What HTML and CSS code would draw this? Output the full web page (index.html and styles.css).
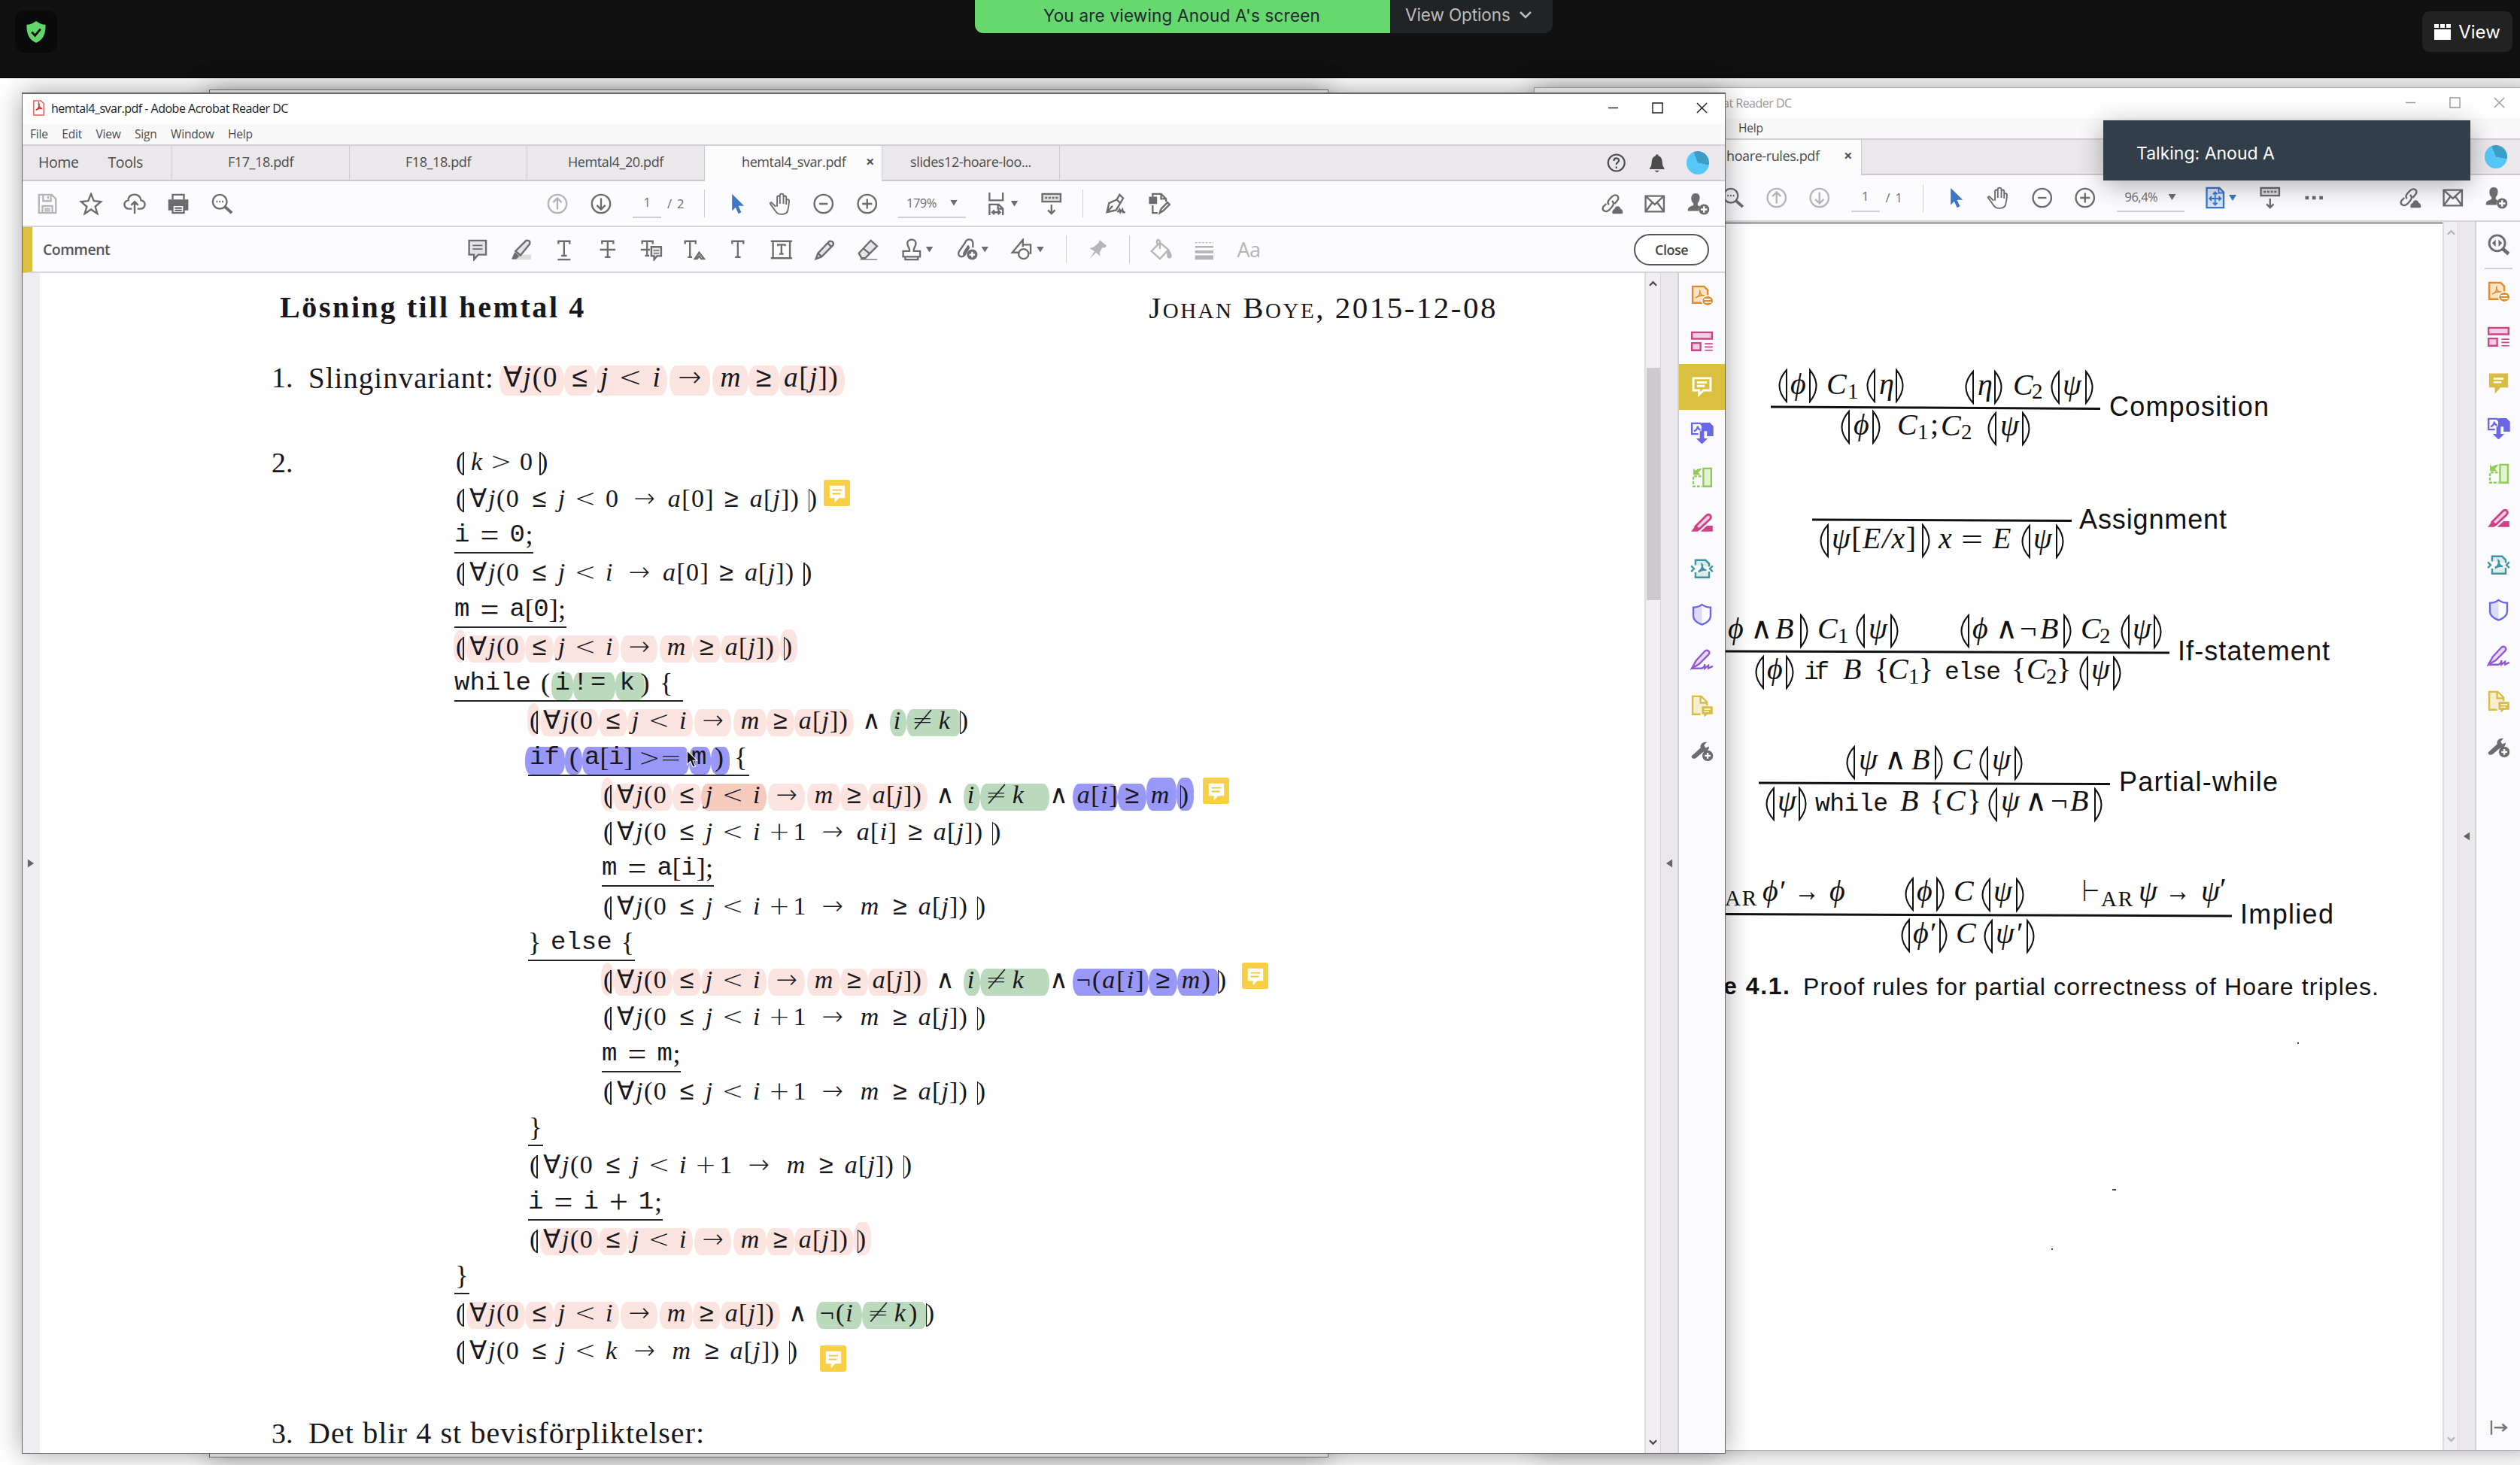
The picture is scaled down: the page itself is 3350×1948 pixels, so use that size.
FILE: index.html
```html
<!DOCTYPE html>
<html lang="en">
<head>
<meta charset="utf-8">
<title>Screen share</title>
<link rel="stylesheet" href="styles.css">
</head>
<body>
<svg class="defs" width="0" height="0">
<defs>
<symbol id="save" viewBox="0 0 32 32"><path d="M4 3h18l6 6v20H4z M10 3v9h11V3 M17 5v4 M9 29V19h14v10 M12 23h8 M12 26h8"/></symbol>
<symbol id="star" viewBox="0 0 32 32"><path d="M16 2l4 10 10 1-8 7 3 10-9-6-9 6 3-10-8-7 10-1z"/></symbol>
<symbol id="cloud" viewBox="0 0 32 32"><path d="M12 23H8a6 6 0 0 1-1-12C7 0 24 0 25 11a6 6 0 0 1-1 12h-4 M16 30V13 M11 18l5-5 5 5"/></symbol>
<symbol id="print" viewBox="0 0 32 32"><path d="M8 10V3h16v7"/><path fill="currentColor" d="M3 11h26v13h-5v-6H8v6H3z"/><path fill="#fcfcfe" d="M8 18h16v11H8z"/><path d="M11 22h10 M11 25.500h10"/></symbol>
<symbol id="find" viewBox="0 0 32 32"><circle cx="13" cy="13" r="10"/><path d="M20 20l10 9" stroke-width="4"/><path d="M8 13h2 M12 13h2 M16 13h2"/></symbol>
<symbol id="up" viewBox="0 0 32 32"><circle cx="16" cy="16" r="13"/><path d="M16 24V9 M10 14l6-6 6 6"/></symbol>
<symbol id="down" viewBox="0 0 32 32"><circle cx="16" cy="16" r="13"/><path d="M16 8v15 M10 18l6 6 6-6"/></symbol>
<symbol id="cursor" viewBox="0 0 32 32"><path fill="currentColor" stroke="none" d="M9 2l17 17h-8l4 9-4 2-4-9-5 5z"/></symbol>
<symbol id="hand" viewBox="0 0 32 32"><path d="M9 20L4 15c-2-2-4 0-2 2l8 11c3 4 14 4 16-2 1-4 2-10 2-14 0-3-4-3-4 0v5V7c0-3-4-3-4 0v9V4c0-3-5-3-5 0v12V7c0-3-4-3-4 0v13" stroke-width="2"/></symbol>
<symbol id="minus" viewBox="0 0 32 32"><circle cx="16" cy="16" r="13"/><path d="M10 16h12"/></symbol>
<symbol id="plus" viewBox="0 0 32 32"><circle cx="16" cy="16" r="13"/><path d="M9 16h14 M16 9v14"/></symbol>
<symbol id="fitw" viewBox="0 0 32 32"><path d="M6 0v11h19V0 M6 32V17h13l6 6v9 M18 17v6h7 M10 28h11 M13 25l-3 3 3 3 M18 25l3 3-3 3"/></symbol>
<symbol id="fitp" viewBox="0 0 32 32"><path fill="#d9e6f8" d="M4 2h18l6 6v22H4z"/><path d="M21 2v7h7 M16 8v17 M8 17h16 M13 11l3-3 3 3 M13 23l3 3 3-3 M11 14l-3 3 3 3 M21 14l3 3-3 3" stroke-width="2"/></symbol>
<symbol id="kbd" viewBox="0 0 32 32"><path fill="#ddd" d="M3 2h26v11H3z"/><path d="M7 7.500h3 M12 7.500h3 M17 7.500h3 M22 7.500h3 M16 17v13 M11 25l5 5 5-5"/></symbol>
<symbol id="pen" viewBox="0 0 32 32"><path d="M4 28L7 15l11-5 5 5-6 10-13 3z M18 10l4-7 5 5-4 7 M4 28l8-9 M19 28l3-4 1 4 3-4 1 4h3"/></symbol>
<symbol id="exp" viewBox="0 0 32 32"><path fill="currentColor" d="M3 7h9v8H3z"/><path d="M7 6V2h12l7 7v4 M19 2v7h7 M7 18v11h7 M17 29l2-6 9-9 3 3-9 9z"/></symbol>
<symbol id="link" viewBox="0 0 32 32"><path d="M12 17c-4-3 0-7 4-11 5-5 12-1 8 5l-4 5 M16 12c5 3 1 8-4 13-5 4-11 0-8-5l4-4"/><path fill="currentColor" d="M18 29c-1-4 2-4 3-5 1-5 6-4 6 0 3 0 4 4 3 5z"/></symbol>
<symbol id="mail" viewBox="0 0 32 32"><path d="M3 5h26v22H3z M3 5l13 12L29 5 M3 27l9-12 M29 27l-9-12"/></symbol>
<symbol id="person" viewBox="0 0 32 32"><path fill="currentColor" stroke="none" d="M12 1c9 0 6 12 3 14v3l3 2a8 8 0 0 0-2 6H1c0-5 2-6 8-8v-3C5 13 4 1 12 1z"/><circle cx="24" cy="24" r="7.500" fill="currentColor" stroke="none"/><path stroke="#fff" d="M24 19.500v9 M19.500 24h9"/></symbol>
<symbol id="help" viewBox="0 0 32 32"><circle cx="16" cy="16" r="13"/><path d="M12 13c0-6 8-5 8-1 0 3-4 3-4 7 M16 22v3"/></symbol>
<symbol id="bell" viewBox="0 0 32 32"><path fill="currentColor" stroke="none" d="M14 3h4v2c7 2 6 9 7 15l3 6H4l3-6c1-6 0-13 7-15z M12 28h8l-4 3z"/></symbol>
<symbol id="note" viewBox="0 0 32 32"><path fill="#e4e4e6" d="M4 3h24v20H17l-6 7v-7H4z"/><path d="M9 10h14 M9 15h14" stroke-width="2"/></symbol>
<symbol id="marker" viewBox="0 0 32 32"><path fill="#ddd" stroke="none" d="M8 30l8-7h14v7z"/><path fill="#e4e4e6" d="M8 18L23 3c5-1 6 2 5 5L15 24z"/><path fill="currentColor" d="M7 20l6 5-4 4H3z" stroke-width="1"/></symbol>
<symbol id="tu" viewBox="0 0 32 32"><path d="M8 8V4h16v4 M16 4v20 M12 24.500h8 M7 30h18"/></symbol>
<symbol id="ts" viewBox="0 0 32 32"><path d="M8 8V4h16v4 M16 4v22 M12 26.500h8 M5 16h22"/></symbol>
<symbol id="tr" viewBox="0 0 32 32"><path d="M3 8V4h15v4 M10 4v20 M7 24.500h6 M1 16h13"/><path fill="#e4e4e6" d="M16 12h14v13h-6l-4 5v-5h-4z"/><path d="M19 17h8 M19 21h8" stroke-width="1.500"/></symbol>
<symbol id="ti" viewBox="0 0 32 32"><path d="M3 8V4h15v4 M10 4v22 M7 26.500h6 M17 29l6-9 7 9h-4l-3-4-3 4z"/></symbol>
<symbol id="t" viewBox="0 0 32 32"><path d="M8 8V4h16v4 M16 4v22 M12 26.500h8"/></symbol>
<symbol id="tb" viewBox="0 0 32 32"><path d="M4 4h24v24H4z M11 11V9h10v2 M16 9v13 M13 22h6 M1 4h6 M25 4h6 M1 28h6 M25 28h6"/></symbol>
<symbol id="pencil" viewBox="0 0 32 32"><path fill="#e4e4e6" d="M3 29l3-8L22 4c5-1 7 3 5 6L11 26z"/><path d="M6 21l5 5 M20 7l5 5"/></symbol>
<symbol id="eraser" viewBox="0 0 32 32"><path fill="#e4e4e6" d="M3 21L20 3l9 8-17 17H7z"/><path d="M9 14l10 8"/><path d="M5 30h24" stroke-width="1.500"/></symbol>
<symbol id="stamp" viewBox="0 0 32 32"><path d="M13 18c1-4-3-6-3-11 0-7 12-7 12 0 0 5-4 7-3 11h9v8H4v-8z M7 26v4h18v-4"/></symbol>
<symbol id="clip" viewBox="0 0 32 32"><path d="M24 13V6c-1-6-9-6-11 0L4 19c-2 6 4 9 8 5l7-12 M12 24c-3-2 2-8 6-14"/><circle cx="23" cy="23" r="7.500" fill="currentColor" stroke="none"/><path stroke="#fff" d="M23 19v8 M19 23h8"/></symbol>
<symbol id="shapes" viewBox="0 0 32 32"><path d="M12 20H2L17 2v10 M17 9h11v12h-2"/><circle cx="18" cy="22" r="7"/></symbol>
<symbol id="pin" viewBox="0 0 32 32"><path fill="currentColor" stroke="none" d="M19 2l10 8-2 3h-4l-4 7 1 5-6-5-9 9 7-11-7-4 6-2 7-6z"/></symbol>
<symbol id="bucket" viewBox="0 0 32 32"><path d="M14 6l12 10-12 13L2 18z M14 15V4c-3-4-5-2-4 4"/><path fill="currentColor" d="M26 17c3 4 5 9 2 10s-4-4-2-10z"/></symbol>
<symbol id="lines" viewBox="0 0 32 32"><path d="M3 6h26" stroke-dasharray="3 2" stroke-width="1.500"/><path d="M3 12h26"/><path d="M3 19h26" stroke-width="4"/><path d="M3 27h26" stroke-width="6"/></symbol>
<symbol id="dots" viewBox="0 0 32 32"><path d="M4 16h5 M14 16h5 M24 16h5" stroke-width="5"/></symbol>

<symbol id="s1" viewBox="0 0 32 32"><path fill="#fbe3c4" d="M3 3h16l5 5v18H3z"/><path d="M7 19c5-2 7-6 6-11 0 6 3 8 7 8-5-1-9 0-13 3" stroke-width="1.500"/><ellipse cx="24" cy="23" rx="8" ry="7" fill="currentColor" stroke="#fff" stroke-width="1.500"/><path stroke="#fff" stroke-width="2" d="M19 21h9 M20 25h9"/></symbol>
<symbol id="s2" viewBox="0 0 32 32"><path fill="#f3cfe5" d="M2 3h28v9H2z M2 18h12v10H2z"/><path d="M20 19h11 M20 23.500h11 M20 28h11" stroke-width="1.700"/></symbol>
<symbol id="s3" viewBox="0 0 32 32"><path stroke-width="3" d="M4 4h24v17H18l-6 6v-6H4z M9 10h14 M9 15h11"/></symbol>
<symbol id="s3f" viewBox="0 0 32 32"><path fill="currentColor" d="M4 4h24v17H18l-6 7v-7H4z"/><path stroke="#fff" d="M9 10h14 M9 15h11"/></symbol>
<symbol id="s4" viewBox="0 0 32 32"><path d="M11 18H2V3h12l3 4 M5 14c5-2 5-7 5-7s1 5 4 5"/><path fill="currentColor" stroke="none" d="M16 2h11l5 5v14h-9v-7h-8z M13 14h6v10h5l-8 8-8-8h5z"/></symbol>
<symbol id="s5" viewBox="0 0 32 32"><path fill="#e2f4d3" d="M18 3h11v25H18z"/><path stroke-dasharray="4 2" d="M15 14H4v14h12"/><path fill="currentColor" stroke="none" d="M4 3l3 3c3-2 5-3 9-3l-5 6 3 3H4z"/></symbol>
<symbol id="s6" viewBox="0 0 32 32"><path fill="currentColor" stroke="none" d="M14 27l9-8h8v8z M1 27l6-8 6 5-3 3z"/><path fill="#f3cfe5" d="M7 20L23 4c5-2 7 3 4 6L12 24z" stroke-width="3"/></symbol>
<symbol id="s7" viewBox="0 0 32 32"><path fill="#d9ecef" d="M7 11V4h14l5 5v4 M26 20v8H7v-7"/><path d="M1 12l4 4-4 4 M31 12l-4 4 4 4 M11 20c6-2 6-9 5-10 0 6 3 8 6 8-4-1-7 0-11 2"/></symbol>
<symbol id="s8" viewBox="0 0 32 32"><path fill="#dcdcf8" stroke="none" d="M16 2v28C8 27 4 23 4 18V6z"/><path stroke-width="2.500" d="M16 2c4 3 8 4 12 4v12c0 5-4 9-12 12C8 27 4 23 4 18V6c4 0 8-1 12-4z"/></symbol>
<symbol id="s9" viewBox="0 0 32 32"><path fill="#e8daf5" d="M2 28l6-11L20 4c5-3 8 2 5 5L12 22z" stroke-width="2.500"/><path d="M2 28h14c4-2 4-6 4-6v6l5-4v4l6-3"/></symbol>
<symbol id="s10" viewBox="0 0 32 32"><path fill="#f6efcf" d="M14 28H3V3h12l8 8v5 M14 3v9h9"/><path fill="currentColor" stroke="none" d="M16 17h15v11h-7l-5 4v-4h-3z"/><path stroke="#fff" stroke-width="1.500" d="M19 21h9 M19 24.500h7"/></symbol>
<symbol id="s11" viewBox="0 0 32 32"><path fill="currentColor" stroke="none" d="M2 23l12-11c-1-6 4-9 9-8l-4 4 2 4 5-2c0 4-2 6-5 7a8 8 0 0 0-6 3l-7 6c-4 3-8-1-6-3z"/><circle cx="24" cy="23" r="7.500" fill="currentColor" stroke="none"/><path stroke="#fff" d="M24 19v8 M20 23h8"/></symbol>
<symbol id="s0" viewBox="0 0 32 32"><circle cx="14" cy="14" r="11" stroke-width="3"/><path d="M22 22l8 7" stroke-width="5"/><path fill="currentColor" stroke="none" d="M12 9v10l-5-5z M16 9v10l5-5z"/></symbol>
<symbol id="tri" viewBox="0 0 32 32"><path fill="#666" stroke="none" d="M22 8v16L10 16z"/></symbol>
<symbol id="out" viewBox="0 0 32 32"><path d="M6 6v20 M10 16h17 M21 11l6 5-6 5"/></symbol>
<symbol id="pdf" viewBox="0 0 16 22"><path fill="#fff" stroke="#e0605a" stroke-width="1.500" d="M1 1h10l4 4v16H1z"/><path stroke="#d8322b" stroke-width="1.700" d="M4 14c5-2 5-8 4-10-1 5 3 8 5 8-3-1-6 0-9 2"/></symbol>
<symbol id="memo" viewBox="0 0 36 36"><rect width="36" height="36" rx="3" fill="#f8cf45" stroke="none"/><path fill="#fff" stroke="none" d="M8 8h21v17h-8l-6 6v-6H8z"/><path stroke="#f3c53a" stroke-width="2" d="M12 14h13 M12 19h11"/></symbol>
</defs>
</svg>

<header class="zoom-bar">
  <div class="shield"><svg viewBox="0 0 26 30"><path fill="#62d66b" stroke="none" d="M13 0c4 3 8 5 13 5 0 12-2 20-13 25C2 25 0 17 0 5c5 0 9-2 13-5z"/><path stroke="#0a0a0a" stroke-width="3" d="M7 15l4.500 5L19 11"/></svg></div>
  <div class="banner"><div class="banner-msg">You are viewing Anoud A's screen</div><div class="banner-opt">View Options<svg viewBox="0 0 16 10"><path d="M1 1l7 7 7-7"/></svg></div></div>
  <div class="view-btn"><svg viewBox="0 0 22 22"><path fill="#fff" stroke="none" d="M0 1h6v5H0z M8 1h6v5H8z M16 1h6v5h-6z M0 8h22v14H0z"/></svg>View</div>
</header>

<main class="desktop">
  <div class="win back"></div>

  <section class="win w2">
    <div class="title"><span>at Reader DC</span><div class="ctl"><svg viewBox="0 0 16 16"><path d="M1 8h14"/></svg><svg viewBox="0 0 16 16"><path d="M1 1h14v14H1z"/></svg><svg viewBox="0 0 16 16"><path d="M1 1l14 14 M15 1L1 15"/></svg></div></div>
    <nav class="menu"><span>Help</span></nav>
    <div class="tabs"><div class="tab on"><span>hoare-rules.pdf</span><b>×</b></div><div class="right"><div class="avatar"></div></div></div>
    <div class="bar">
      <svg class="ic"><use href="#find"/></svg><svg class="ic dim"><use href="#up"/></svg><svg class="ic dim"><use href="#down"/></svg>
      <span class="pg">1</span><span class="of">/&nbsp; 1</span><i class="dv"></i>
      <svg class="ic blue"><use href="#cursor"/></svg><svg class="ic"><use href="#hand"/></svg><svg class="ic"><use href="#minus"/></svg><svg class="ic"><use href="#plus"/></svg>
      <span class="zm">96,4%<em></em></span><svg class="ic blue"><use href="#fitp"/></svg><em class="dd bl"></em><svg class="ic k"><use href="#kbd"/></svg><svg class="ic"><use href="#dots"/></svg>
      <div class="right"><svg class="ic"><use href="#link"/></svg><svg class="ic"><use href="#mail"/></svg><svg class="ic"><use href="#person"/></svg></div>
    </div>
    <div class="body">
      <div class="scan">
        <svg viewBox="2294 297 953 1630" width="953" height="1630" class="fig">
          <g class="rule"><path d="M2354 540l200 1 238 1.500"/><path d="M2409 690l345 1.500"/><path d="M2290 865l594 2"/><path d="M2338 1040l467 1.500"/><path d="M2290 1214.500l677 2.500"/></g>
          <g class="par">
            <path d="M2375 491q-19 21 0 42z M2406 491q17 21 0 42z M2492 491q-19 21 0 42z M2521 491q17 21 0 42z M2623 493q-19 21 0 42z M2652 493q17 21 0 42z M2737 493q-19 21 0 42z M2773 493q17 21 0 42z"/>
            <path d="M2458 546q-19 21 0 42z M2490 546q17 21 0 42z M2653 548q-19 21 0 42z M2689 548q17 21 0 42z"/>
            <path d="M2430 697q-19 21 0 42z M2556 697q17 21 0 42z M2698 698q-19 21 0 42z M2734 698q17 21 0 42z"/>
            <path d="M2394 817q17 21 0 42z M2478 817q-19 21 0 42z M2514 817q17 21 0 42z M2617 817q-19 21 0 42z M2744 817q17 21 0 42z M2830 818q-19 21 0 42z M2864 818q17 21 0 42z"/>
            <path d="M2344 872q-19 21 0 42z M2375 872q17 21 0 42z M2775 873q-19 21 0 42z M2810 873q17 21 0 42z"/>
            <path d="M2465 992q-19 21 0 42z M2573 992q17 21 0 42z M2642 993q-19 21 0 42z M2679 993q17 21 0 42z"/>
            <path d="M2358 1047q-19 21 0 42z M2392 1047q17 21 0 42z M2654 1048q-19 21 0 42z M2785 1048q17 21 0 42z"/>
            <path d="M2543 1167q-19 21 0 42z M2575 1167q17 21 0 42z M2645 1168q-19 21 0 42z M2681 1168q17 21 0 42z"/>
            <path d="M2538 1222q-19 21 0 42z M2579 1222q17 21 0 42z M2648 1223q-19 21 0 42z M2695 1223q17 21 0 42z"/>
          </g>
          <g class="mi">
            <text x="2380" y="523">ϕ</text><text x="2428" y="523">C</text><text x="2498" y="523">η</text><text x="2629" y="524">η</text><text x="2676" y="524">C</text><text x="2742" y="524">ψ</text>
            <text x="2464" y="577">ϕ</text><text x="2522" y="577">C</text><text x="2580" y="578">C</text><text x="2659" y="578">ψ</text>
            <text x="2435" y="728" textLength="112"><tspan>ψ</tspan><tspan class="up">[</tspan>E/x<tspan class="up">]</tspan></text><text x="2577" y="728">x</text><text x="2649" y="728">E</text><text x="2703" y="728">ψ</text>
            <text x="2297" y="848">ϕ</text><text x="2360" y="848">B</text><text x="2416" y="848">C</text><text x="2484" y="848">ψ</text><text x="2622" y="848">ϕ</text><text x="2712" y="848">B</text><text x="2766" y="848">C</text><text x="2835" y="848">ψ</text>
            <text x="2349" y="902">ϕ</text><text x="2450" y="902">B</text><text x="2510" y="902">C</text><text x="2694" y="902">C</text><text x="2780" y="902">ψ</text>
            <text x="2471" y="1022">ψ</text><text x="2541" y="1022">B</text><text x="2595" y="1022">C</text><text x="2648" y="1022">ψ</text>
            <text x="2363" y="1077">ψ</text><text x="2526" y="1077">B</text><text x="2586" y="1077">C</text><text x="2660" y="1077">ψ</text><text x="2752" y="1077">B</text>
            <text x="2343" y="1197">ϕ</text><text x="2432" y="1197">ϕ</text><text x="2548" y="1197">ϕ</text><text x="2597" y="1197">C</text><text x="2650" y="1197">ψ</text><text x="2843" y="1197">ψ</text><text x="2926" y="1197">ψ</text>
            <text x="2543" y="1253">ϕ</text><text x="2600" y="1253">C</text><text x="2653" y="1253">ψ</text>
          </g>
          <g class="up">
            <text x="2566" y="577">;</text><text x="2607" y="730" textLength="29" lengthAdjust="spacingAndGlyphs">=</text>
            <text x="2327" y="848" textLength="23">∧</text><text x="2653" y="848" textLength="23">∧</text><text x="2685" y="848" textLength="24">¬</text>
            <text x="2492" y="902">{</text><text x="2551" y="902">}</text><text x="2674" y="902">{</text><text x="2734" y="902">}</text>
            <text x="2505" y="1022" textLength="23">∧</text><text x="2565" y="1077">{</text><text x="2615" y="1077">}</text><text x="2692" y="1077" textLength="23">∧</text><text x="2726" y="1077" textLength="24">¬</text>
            <text x="2366" y="1197">′</text><text x="2385" y="1197" textLength="34" lengthAdjust="spacingAndGlyphs">→</text><text x="2768" y="1197" textLength="23" lengthAdjust="spacingAndGlyphs">⊢</text><text x="2878" y="1197" textLength="34" lengthAdjust="spacingAndGlyphs">→</text><text x="2951" y="1194">′</text><text x="2566" y="1253">′</text><text x="2681" y="1253">′</text>
          </g>
          <g class="sub"><text x="2456" y="529">1</text><text x="2701" y="529">2</text><text x="2549" y="583">1</text><text x="2607" y="583">2</text><text x="2443" y="854">1</text><text x="2791" y="854">2</text><text x="2537" y="908">1</text><text x="2720" y="908">2</text><text x="2293" y="1203" textLength="42">AR</text><text x="2793" y="1204" textLength="42">AR</text></g>
          <g class="tt"><text x="2398" y="902" textLength="34">if</text><text x="2585" y="902" textLength="75">else</text><text x="2413" y="1077" textLength="97">while</text></g>
          <g class="lab"><text x="2804" y="552" textLength="212">Composition</text><text x="2764" y="702" textLength="196">Assignment</text><text x="2895" y="877" textLength="202">If-statement</text><text x="2817" y="1051" textLength="211">Partial-while</text><text x="2978" y="1227" textLength="124">Implied</text></g>
          <g class="cap"><text x="2291" y="1321" textLength="88" font-weight="bold">e 4.1.</text><text x="2397" y="1322" textLength="765">Proof rules for partial correctness of Hoare triples.</text></g>
          <path fill="#444" stroke="none" d="M2808 1580h5v2h-5z M2727 1659h2v2h-2z M3054 1385h2v2h-2z"/>
        </svg>
      </div>
      <div class="scroll"><svg viewBox="0 0 12 8"><path d="M1 7l5-5 5 5"/></svg><svg viewBox="0 0 12 8"><path d="M1 1l5 5 5-5"/></svg></div>
      <div class="strip"><svg class="tri"><use href="#tri"/></svg></div>
      <aside class="side">
        <svg class="g"><use href="#s0"/></svg><hr>
        <svg class="c-or"><use href="#s1"/></svg><svg class="c-pk"><use href="#s2"/></svg><svg class="c-ye"><use href="#s3f"/></svg><svg class="c-in"><use href="#s4"/></svg><svg class="c-gr"><use href="#s5"/></svg><svg class="c-pk"><use href="#s6"/></svg><svg class="c-te"><use href="#s7"/></svg><svg class="c-in"><use href="#s8"/></svg><svg class="c-pu"><use href="#s9"/></svg><svg class="c-ye"><use href="#s10"/></svg><svg class="g"><use href="#s11"/></svg>
        <svg class="g last"><use href="#out"/></svg>
      </aside>
    </div>
  </section>

  <section class="win w1">
    <div class="title"><svg class="pdf"><use href="#pdf"/></svg><span>hemtal4_svar.pdf - Adobe Acrobat Reader DC</span><div class="ctl"><svg viewBox="0 0 16 16"><path d="M1 8h14"/></svg><svg viewBox="0 0 16 16"><path d="M1 1h14v14H1z"/></svg><svg viewBox="0 0 16 16"><path d="M1 1l14 14 M15 1L1 15"/></svg></div></div>
    <nav class="menu"><span>File</span><span>Edit</span><span>View</span><span>Sign</span><span>Window</span><span>Help</span></nav>
    <div class="tabs"><div class="home"><span>Home</span><span>Tools</span></div><div class="tab">F17_18.pdf</div><div class="tab">F18_18.pdf</div><div class="tab">Hemtal4_20.pdf</div><div class="tab on"><span>hemtal4_svar.pdf</span><b>×</b></div><div class="tab">slides12-hoare-loo...</div>
      <div class="right"><svg class="ic"><use href="#help"/></svg><svg class="ic"><use href="#bell"/></svg><div class="avatar"></div></div></div>
    <div class="bar">
      <svg class="ic dim"><use href="#save"/></svg><svg class="ic"><use href="#star"/></svg><svg class="ic"><use href="#cloud"/></svg><svg class="ic"><use href="#print"/></svg><svg class="ic"><use href="#find"/></svg>
      <svg class="ic dim first"><use href="#up"/></svg><svg class="ic"><use href="#down"/></svg>
      <span class="pg">1</span><span class="of">/&nbsp; 2</span><i class="dv"></i>
      <svg class="ic blue"><use href="#cursor"/></svg><svg class="ic"><use href="#hand"/></svg><svg class="ic"><use href="#minus"/></svg><svg class="ic"><use href="#plus"/></svg>
      <span class="zm">179%<em></em></span><svg class="ic"><use href="#fitw"/></svg><em class="dd"></em><svg class="ic k"><use href="#kbd"/></svg><i class="dv d2"></i><svg class="ic"><use href="#pen"/></svg><svg class="ic"><use href="#exp"/></svg>
      <div class="right"><svg class="ic"><use href="#link"/></svg><svg class="ic"><use href="#mail"/></svg><svg class="ic"><use href="#person"/></svg></div>
    </div>
    <div class="bar cmt">
      <span class="name">Comment</span>
      <svg class="ic"><use href="#note"/></svg><svg class="ic"><use href="#marker"/></svg><svg class="ic"><use href="#tu"/></svg><svg class="ic"><use href="#ts"/></svg><svg class="ic"><use href="#tr"/></svg><svg class="ic"><use href="#ti"/></svg><svg class="ic"><use href="#t"/></svg><svg class="ic"><use href="#tb"/></svg><svg class="ic"><use href="#pencil"/></svg><svg class="ic"><use href="#eraser"/></svg><svg class="ic"><use href="#stamp"/></svg><em class="dd"></em><svg class="ic s"><use href="#clip"/></svg><em class="dd"></em><svg class="ic s"><use href="#shapes"/></svg><em class="dd"></em><i class="dv d3"></i><svg class="ic dim"><use href="#pin"/></svg><i class="dv d4"></i><svg class="ic dim"><use href="#bucket"/></svg><svg class="ic dim"><use href="#lines"/></svg><span class="aa">Aa</span>
      <button class="close">Close</button>
    </div>
    <div class="body">
      <div class="nav"><svg class="tri flip"><use href="#tri"/></svg></div>
      <article class="paper">
        <header class="dochead"><h1>Lösning till hemtal 4</h1><p>Johan Boye, 2015-12-08</p></header>
        <div class="item i1"><span class="no">1.</span><span class="txt sl">Slinginvariant:</span><span class="m big pk"><span class="c1">∀<i>j</i>(0</span><span class="c2">≤</span><span class="c3"><i>j</i><u>&lt;</u><i>i</i></span><span class="c4">→</span><span class="c5"><i>m</i></span><span class="c6">≥</span><span class="c7"><i>a</i>[<i>j</i>])</span></span></div>
        <div class="item i2"><span class="no">2.</span>
          <div class="prog">
            <div class="m"><b class="lp">(</b><span class="kk"><i>k</i><u>&gt;</u>0</span><b class="rp">)</b></div>
            <div class="m"><b class="lp">(</b><span class="c1">∀<i>j</i>(0</span><span class="c2">≤</span><span class="c3 w0"><i>j</i><u>&lt;</u>0</span><span class="c4">→</span><span class="c5 a0"><i>a</i>[0]</span><span class="c6">≥</span><span class="c7"><i>a</i>[<i>j</i>])</span><b class="rp">)</b><svg class="memo n1"><use href="#memo"/></svg></div>
            <div class="m code"><span>i<s>=</s>0<q>;</q></span></div>
            <div class="m"><b class="lp">(</b><span class="c1">∀<i>j</i>(0</span><span class="c2">≤</span><span class="c3"><i>j</i><u>&lt;</u><i>i</i></span><span class="c4">→</span><span class="c5 a0"><i>a</i>[0]</span><span class="c6">≥</span><span class="c7"><i>a</i>[<i>j</i>])</span><b class="rp">)</b></div>
            <div class="m code"><span>m<s>=</s>a<q>[</q>0<q>]</q><q>;</q></span></div>
            <div class="m pk"><b class="lp">(</b><span class="c1">∀<i>j</i>(0</span><span class="c2">≤</span><span class="c3"><i>j</i><u>&lt;</u><i>i</i></span><span class="c4">→</span><span class="c5"><i>m</i></span><span class="c6">≥</span><span class="c7"><i>a</i>[<i>j</i>])</span><b class="rp">)</b></div>
            <div class="m code wh"><span>while<q class="sp">(</q><u class="gn"><u>i</u><u>!=</u><u>k</u></u><q>)</q><q class="br">{</q></span></div>
            <div class="m t1"><span class="pk"><b class="lp">(</b><span class="c1">∀<i>j</i>(0</span><span class="c2">≤</span><span class="c3"><i>j</i><u>&lt;</u><i>i</i></span><span class="c4">→</span><span class="c5"><i>m</i></span><span class="c6">≥</span><span class="c7"><i>a</i>[<i>j</i>])</span></span><span class="an">∧</span><span class="gn"><span class="g1"><i>i</i></span><span class="g2"><u>≠</u><i>k</i></span></span><b class="rp tight">)</b></div>
            <div class="m code t1 if"><span><u class="bu"><u>if</u><u><q>(</q></u><u>a<q>[</q>i<q>]</q></u><u class="ge">&gt;=</u><u>m</u><u><q>)</q></u></u><q class="br">{</q></span></div>
            <div class="m t2"><span class="pk"><b class="lp">(</b><span class="c1">∀<i>j</i>(0</span><span class="c2">≤</span><span class="c3 deep"><i>j</i><u>&lt;</u><i>i</i></span><span class="c4">→</span><span class="c5"><i>m</i></span><span class="c6">≥</span><span class="c7"><i>a</i>[<i>j</i>])</span></span><span class="an">∧</span><span class="gn"><span class="g1"><i>i</i></span><span class="g2 g3"><u>≠</u><i>k</i></span></span><span class="an a2">∧</span><span class="bu"><span class="b1"><i>a</i>[<i>i</i>]</span><span class="b2">≥</span><span class="b3"><i>m</i></span><b class="rp">)</b></span><svg class="memo n2"><use href="#memo"/></svg></div>
            <div class="m t2"><b class="lp">(</b><span class="c1">∀<i>j</i>(0</span><span class="c2">≤</span><span class="c3"><i>j</i><u>&lt;</u><i>i</i></span><span class="pl"><u>+</u>1</span><span class="c4">→</span><span class="c5 ai"><i>a</i>[<i>i</i>]</span><span class="c6">≥</span><span class="c7"><i>a</i>[<i>j</i>])</span><b class="rp">)</b></div>
            <div class="m code t2"><span>m<s>=</s>a<q>[</q>i<q>]</q><q>;</q></span></div>
            <div class="m t2"><b class="lp">(</b><span class="c1">∀<i>j</i>(0</span><span class="c2">≤</span><span class="c3"><i>j</i><u>&lt;</u><i>i</i></span><span class="pl"><u>+</u>1</span><span class="c4">→</span><span class="c5"><i>m</i></span><span class="c6">≥</span><span class="c7"><i>a</i>[<i>j</i>])</span><b class="rp">)</b></div>
            <div class="m code t1"><span><q class="b0">}</q>else<q class="br b4">{</q></span></div>
            <div class="m t2"><span class="pk"><b class="lp">(</b><span class="c1">∀<i>j</i>(0</span><span class="c2">≤</span><span class="c3"><i>j</i><u>&lt;</u><i>i</i></span><span class="c4">→</span><span class="c5"><i>m</i></span><span class="c6">≥</span><span class="c7"><i>a</i>[<i>j</i>])</span></span><span class="an">∧</span><span class="gn"><span class="g1"><i>i</i></span><span class="g2 g3"><u>≠</u><i>k</i></span></span><span class="an a2">∧</span><span class="bu"><span class="b5">¬(<i>a</i>[<i>i</i>]</span><span class="b2">≥</span><span class="b6"><i>m</i>)</span></span><b class="rp tight">)</b><svg class="memo n3"><use href="#memo"/></svg></div>
            <div class="m t2"><b class="lp">(</b><span class="c1">∀<i>j</i>(0</span><span class="c2">≤</span><span class="c3"><i>j</i><u>&lt;</u><i>i</i></span><span class="pl"><u>+</u>1</span><span class="c4">→</span><span class="c5"><i>m</i></span><span class="c6">≥</span><span class="c7"><i>a</i>[<i>j</i>])</span><b class="rp">)</b></div>
            <div class="m code t2"><span>m<s>=</s>m<q>;</q></span></div>
            <div class="m t2"><b class="lp">(</b><span class="c1">∀<i>j</i>(0</span><span class="c2">≤</span><span class="c3"><i>j</i><u>&lt;</u><i>i</i></span><span class="pl"><u>+</u>1</span><span class="c4">→</span><span class="c5"><i>m</i></span><span class="c6">≥</span><span class="c7"><i>a</i>[<i>j</i>])</span><b class="rp">)</b></div>
            <div class="m code t1"><span><q class="b7">}</q></span></div>
            <div class="m t1"><b class="lp">(</b><span class="c1">∀<i>j</i>(0</span><span class="c2">≤</span><span class="c3"><i>j</i><u>&lt;</u><i>i</i></span><span class="pl"><u>+</u>1</span><span class="c4">→</span><span class="c5"><i>m</i></span><span class="c6">≥</span><span class="c7"><i>a</i>[<i>j</i>])</span><b class="rp">)</b></div>
            <div class="m code t1"><span>i<s>=</s>i<s>+</s>1<q>;</q></span></div>
            <div class="m t1 pk nolp"><b class="lp">(</b><span class="c1">∀<i>j</i>(0</span><span class="c2">≤</span><span class="c3"><i>j</i><u>&lt;</u><i>i</i></span><span class="c4">→</span><span class="c5"><i>m</i></span><span class="c6">≥</span><span class="c7"><i>a</i>[<i>j</i>])</span><b class="rp">)</b></div>
            <div class="m code"><span><q class="b7">}</q></span></div>
            <div class="m"><span class="pk nolp"><b class="lp">(</b><span class="c1">∀<i>j</i>(0</span><span class="c2">≤</span><span class="c3"><i>j</i><u>&lt;</u><i>i</i></span><span class="c4">→</span><span class="c5"><i>m</i></span><span class="c6">≥</span><span class="c7"><i>a</i>[<i>j</i>])</span></span><span class="an">∧</span><span class="gn"><span class="g4">¬(<i>i</i></span><span class="g5"><u>≠</u><i>k</i>)</span></span><b class="rp tight">)</b></div>
            <div class="m"><b class="lp">(</b><span class="c1">∀<i>j</i>(0</span><span class="c2">≤</span><span class="c3 w0"><i>j</i><u>&lt;</u><i>k</i></span><span class="c4">→</span><span class="c5"><i>m</i></span><span class="c6">≥</span><span class="c7"><i>a</i>[<i>j</i>])</span><b class="rp">)</b><svg class="memo n4"><use href="#memo"/></svg></div>
          </div>
        </div>
        <div class="item i3"><span class="no">3.</span><span class="txt de">Det blir 4 st bevisförpliktelser:</span></div>
        <svg class="pointer" viewBox="0 0 14 22"><path fill="#111" stroke="#fff" stroke-width="1" d="M1 1v17l4-4 3 7 3-1-3-7h5z"/></svg>
      </article>
      <div class="scroll"><svg viewBox="0 0 12 8"><path d="M1 7l5-5 5 5"/></svg><div class="thumb"></div><svg viewBox="0 0 12 8"><path d="M1 1l5 5 5-5"/></svg></div>
      <div class="strip"><svg class="tri"><use href="#tri"/></svg></div>
      <aside class="side">
        <svg class="c-or"><use href="#s1"/></svg><svg class="c-pk"><use href="#s2"/></svg><svg class="sel"><use href="#s3"/></svg><svg class="c-in"><use href="#s4"/></svg><svg class="c-gr"><use href="#s5"/></svg><svg class="c-pk"><use href="#s6"/></svg><svg class="c-te"><use href="#s7"/></svg><svg class="c-in"><use href="#s8"/></svg><svg class="c-pu"><use href="#s9"/></svg><svg class="c-ye"><use href="#s10"/></svg><svg class="g"><use href="#s11"/></svg>
      </aside>
    </div>
  </section>

  <div class="talking">Talking: Anoud A</div>
</main>
</body>
</html>
```
FILE: styles.css
```css
* { box-sizing: border-box; }
html, body { margin: 0; width: 3350px; height: 1948px; overflow: hidden; background: #fff; }
body { font-family: "Open Sans", "Noto Sans", sans-serif; color: #4b4b4b; display: flex; flex-direction: column; }
svg { fill: none; stroke: currentColor; stroke-width: 2.5; flex: none; }
.defs { position: absolute; }
em, i { font-style: normal; }

/* meeting bar */
.zoom-bar { height: 104px; background: #111; border-bottom: 1px solid #000; display: flex; justify-content: space-between; align-items: flex-start; font-family: Inter, sans-serif; color: #fff; }
.shield { width: 56px; height: 56px; margin: 14px 0 0 20px; border-radius: 12px; background: #0a0a0a; display: flex; align-items: center; justify-content: center; }
.shield svg { width: 26px; height: 29px; }
.banner { display: flex; height: 44px; margin-left: 64px; border-radius: 0 0 11px 11px; overflow: hidden; font-size: 22.500px; line-height: 42px; }
.banner-msg { width: 552px; background: #66d86d; color: #1d2a30; text-align: center; letter-spacing: .2px; padding-right: 2px; }
.banner-opt { width: 216px; background: #222324; color: #bdbdbd; display: flex; align-items: center; padding-left: 20px; gap: 12px; line-height: 38px; padding-bottom: 5px; letter-spacing: -.1px; }
.banner-opt svg { width: 16px; height: 10px; }
.view-btn { width: 120px; height: 54px; margin: 15px 10px 0 0; border-radius: 9px; background: #222; display: flex; align-items: center; justify-content: center; gap: 10px; font-size: 24px; }
.view-btn svg { width: 22px; height: 22px; }

/* windows */
.desktop { position: relative; height: 1844px; background: #fff; }
.win { position: absolute; background: #fcfcfe; border: 1px solid #777; display: flex; flex-direction: column; box-shadow: 0 0 34px rgba(0,0,0,.36); }
.back { left: 278px; top: 15px; width: 1488px; height: 1819px; }
.w2 { left: 2039px; top: 12px; width: 1330px; height: 1813px; border-color: #aaa; }
.w1 { left: 29px; top: 19px; width: 2265px; height: 1810px; border-color: #666; border-top-width: 2px; }
.w2 > * { width: 1310px; }

.title { height: 40px; display: flex; align-items: center; font-size: 16px; color: #1c1c1c; letter-spacing: -.5px; background: #fff; padding-bottom: 3px; }
.w1 .title { padding-left: 13px; }
.pdf { width: 17px; height: 21px; margin-right: 8px; }
.w2 .title { padding-left: 250px; padding-bottom: 1px; color: #999; }
.ctl { margin-left: auto; display: flex; gap: 44px; padding-right: 23px; }
.ctl svg { width: 15px; height: 15px; stroke-width: 1.5; }
.w2 .ctl { padding-right: 20px; }
.menu { height: 27px; display: flex; gap: 18.500px; padding-left: 10px; font-size: 15.500px; line-height: 26px; letter-spacing: -.2px; background: #f9f9fa; }
.w2 .menu { padding-left: 271px; }
.tabs { height: 49px; flex: none; border-top: 2px solid #d2d0d4; display: flex; background: #eae8eb; font-size: 18px; line-height: 43px; letter-spacing: -.4px; box-shadow: inset 0 -2px #cdcbd0; }
.home { width: 199px; display: flex; padding-left: 21px; gap: 39px; font-size: 19.500px; border-right: 1px solid #cdcbd0; }
.tab { width: 236px; text-align: center; border-right: 1px solid #cdcbd0; }
.tab.on { background: #fcfcfd; display: flex; justify-content: space-between; padding: 0 10px 0 49px; }
.tab b { font-size: 20px; line-height: 41px; color: #555; }
.w2 .tab.on { width: 435px; padding-left: 255px; padding-right: 12px; }
.right { margin-left: auto; display: flex; align-items: center; }
.tabs .right { padding-right: 21px; }
.w2 .tabs .right { padding-right: 17px; }
.tabs .ic:first-child { margin-right: -4px; }
.tabs .right .ic { height: 27px; }
.tabs .right { padding-bottom: 3px; }
.avatar { width: 30px; height: 31px; margin-left: 11px; border-radius: 50%; background: conic-gradient(#3d9dc4 0 28%, #55c8f7 28% 94%, #3d9dc4 94%); }

.bar { height: 61px; flex: none; display: flex; align-items: center; border-bottom: 2px solid #d6d5d9; padding-left: 4px; color: #6c6c6e; font-size: 16.500px; letter-spacing: -.5px; }
.w2 .bar { padding-left: 235px; height: 62px; }
.ic { width: 57.500px; height: 30px; }
.w1 > .bar:not(.cmt) > .ic:nth-of-type(-n+7) { width: 58px; }
.dim { color: #b5b5b7; }
.blue { color: #3d76c8; }
.first { margin-left: 388px; }
.pg { width: 38px; height: 38px; line-height: 34px; margin-left: 13px; border-bottom: 2px solid #cfcfd2; text-align: center; }
.of { margin-left: 8px; width: 24px; line-height: 34px; white-space: nowrap; }
.dv { width: 1px; height: 37px; background: #cfcfd3; margin: 0 14px 0 25px; }
.zm { width: 90px; height: 38px; line-height: 34px; margin: 0 12px 0 13px; padding-left: 11px; border-bottom: 2px solid #cfcfd2; display: flex; align-items: center; }
.zm em { margin-left: auto; margin-right: 11px; }
.zm em, .dd { width: 10px; height: 8px; background: #6c6c6e; clip-path: polygon(0 0, 100% 0, 50% 100%); flex: none; }
.dd { margin-left: -10px; }
.bl { background: #3d76c8; }
.k { margin-left: 15px; }
.w2 .k { margin-left: 16px; }
.d2 { margin-left: 13px; }
.bar > .right { padding-right: 7px; }
.w2 .bar > .right { padding-right: 3px; }
.cmt { border-left: 13px solid #dbc03f; padding-left: 14px; }
.cmt .name { width: 549px; font-size: 19.500px; font-weight: 600; color: #555; }
.cmt > .ic { width: 57.700px; }
.s { margin-left: 16px; }
.d3 { margin: 0 12px 0 29px; }
.d4 { margin: 0 13px; }
.aa { width: 60px; text-align: center; font-size: 27px; color: #b5b5b7; }
.close { margin-left: auto; margin-right: 21px; width: 100px; height: 42px; border: 2px solid #555; border-radius: 21px; background: #fff; font: 600 18px "Open Sans", sans-serif; letter-spacing: -.5px; color: #444; padding: 0; }

.body { flex: 1; min-height: 0; display: flex; }
.nav { width: 23px; background: #eeedf0; display: flex; align-items: center; }
.tri { width: 22px; height: 24px; }
.flip { transform: scaleX(-1); }
.scroll { width: 22px; background: #f1eff3; border-left: 2px solid #dcdbdf; border-right: 1px solid #d5d4d8; display: flex; flex-direction: column; align-items: center; justify-content: space-between; padding: 10px 0; }
.scroll svg { width: 11px; height: 8px; }
.w2 .scroll { color: #b5b5b5; }
.thumb { width: 18px; height: 309px; margin: 108px 0 auto; background: #cccace; flex: none; }
.strip { width: 24px; background: #eae8eb; border-right: 2px solid #d2d0d4; display: flex; align-items: center; }
.side { width: 61px; background: #fafafc; display: flex; flex-direction: column; align-items: center; }
.side svg { width: 61px; height: 60.500px; padding: 15px; }
.w2 .side { width: 58px; }
.w2 .side hr { width: 37px; margin: 0; border: 0; border-top: 2px solid #d2d0d4; }
.w2 .side .last { margin-top: auto; color: #777; }
.g { color: #6c6c6e; }
.c-or { color: #e08a2e; } .c-pk { color: #cf4386; } .c-ye { color: #d9bd42; } .c-in { color: #6a66e6; } .c-gr { color: #8fcc55; } .c-te { color: #3f949e; } .c-pu { color: #9159d2; }
.side .sel { background: #dbc03f; color: #fff; }

/* scanned page */
.scan { width: 1209px; padding-left: 254px; border-top: 3px solid #a9a9ab; background: #fff; }
.fig { display: block; color: #111; }
.fig text { fill: #111; stroke: none; }
.rule path { stroke-width: 3; }
.par path { stroke-width: 2; }
.mi { font: italic 40px "Liberation Serif", serif; }
.up { font: normal 40px "Liberation Serif", serif; }
.sub { font: 29px "Liberation Serif", serif; }
.tt { font: 33px "Liberation Mono", monospace; }
.lab { font: 36px "Liberation Sans", sans-serif; }
.cap { font: 32px "Liberation Sans", sans-serif; }

/* article page */
.paper { position: relative; width: 2133px; background: #fefefe; padding: 27px 0 0 308px; font: 38px/40px "Liberation Serif", serif; color: #17171c; overflow: hidden; }
.dochead { display: flex; justify-content: space-between; padding-left: 11px; width: 1630px; height: 40px; line-height: 38px; }
.dochead h1 { margin: 0; font-size: 40px; letter-spacing: 2.600px; white-space: nowrap; }
.dochead p { margin: 0; font-size: 41px; font-variant: small-caps; letter-spacing: 2.500px; white-space: nowrap; }
.item { display: flex; align-items: flex-start; }
.no { width: 49px; }
.i1 { margin-top: 56px; height: 40px; line-height: 33px; }
.i2 { margin-top: 72.500px; line-height: 32px; }
.i3 { margin-top: 59px; line-height: 34px; white-space: nowrap; }
.sl { width: 254px; font-size: 39px; letter-spacing: 1px; }
.de { font-size: 40px; letter-spacing: 1.100px; }
.prog { padding-left: 193px; }
.m { position: relative; font-size: 34px; line-height: .853em; height: 49.250px; display: flex; white-space: nowrap; }
.m i { font-style: italic; }
.m b { font-weight: normal; }
.m u { text-decoration: none; }
.big { font-size: 37.400px; }
.m > span, .m > span > span, .m b { display: inline-flex; flex: none; }
.m > span > span, .m > span, .m b { height: 1.06em; }
.t1 { margin-left: 98px; } .t2 { margin-left: 196px; }
.lp { width: 17px; padding-left: 3px; }
.rp { width: 23px; padding-left: 5px; }
.lp, .rp { position: relative; }
.lp::after, .rp::after { content: ""; position: absolute; top: 2px; width: 1.500px; height: 31px; background: #222; }
.lp::after { left: 12px; }
.rp::after { left: 5px; }
.m .tight { padding-left: 0; margin-left: -2px; }
.tight::after { left: 0; }
.c1, .c2, .c3, .c4, .c5, .c6, .c7, .g1, .g2, .g4, .g5, .b1, .b2, .b3, .b5, .b6 { border-radius: .25em / .5em; }
/* relation signs are drawn wide and light */
.c2, .c4, .c6, .b2, .c3 u, .pl u, .kk u, .g2 u, .g5 u { font-family: "DejaVu Sans", sans-serif; font-weight: 200; letter-spacing: 0; }
.c3 u, .pl u, .kk u, .g2 u, .g5 u { display: inline-block; text-align: center; }
.m .c1 { width: 2.294em; padding-left: .13em; letter-spacing: .045em; }
.m .c2 { width: 1.118em; justify-content: center; }
.m .c3 { width: 2.55em; padding-left: .17em; margin-right: .08em; }
.c3 u { width: 1.58em; }
.m .w0 { width: 2.75em; }
.m .c4 { width: 1.44em; justify-content: center; margin-right: .08em; }
.m .c5 { width: 1.29em; justify-content: center; }
.m .a0 { width: 2.06em; letter-spacing: .04em; }
.m .ai { width: 1.88em; letter-spacing: .04em; }
.m .c6 { width: 1.09em; justify-content: center; }
.m .c7 { width: 2.32em; padding-left: .17em; letter-spacing: .035em; }
.kk { padding-left: 6px; width: 92px; }
.kk u { width: 50px; }
.pl { width: 61px; margin-left: -4px; margin-right: 4px; }
.pl u { width: 37px; }
.an { width: 48px; justify-content: center; }
.m .g1 { width: 22px; padding-left: 5px; }
.m .g2 { width: 73px; }
.g2 u, .g5 u { width: 43px; }
.m .g3 { width: 92px; }
.m .a2 { width: 31px; justify-content: flex-start; }
.m .b1 { width: 60px; padding-left: 6px; letter-spacing: 1.500px; }
.m .b2 { width: 38px; justify-content: center; }
.m .b3 { width: 40px; padding-left: 6px; }
.m .b5 { width: 101px; padding-left: 5px; letter-spacing: 2px; }
.m .b6 { width: 56px; padding-left: 6px; letter-spacing: 2px; }
.m .g4 { width: 61px; padding-left: 5px; letter-spacing: 2px; }
.m .g5 { width: 87px; letter-spacing: 4px; }
.pk > * { background: #fbe4df; }
.pk .lp, .m.pk .rp, .bu .rp { border-radius: .3em / .6em; }
.pk > .lp, .m.pk > .rp { box-shadow: 0 -8px #fbe4df; }
.nolp > .lp { background: none; box-shadow: none; }
.pk > .deep { background: #f6cbbd; }
.gn > * { background: #bbdabd; }
.bu > * { background: #9a98f6; }
.bu > .b3, .bu > .rp { box-shadow: 0 -8px #9a98f6; }

.code { font-family: "Liberation Mono", monospace; }
.m.code > span { height: 40px; margin: -1px 0 0 1px; padding-top: 1px; border-bottom: 2px solid #222; display: inline-flex; }
.code s { width: 53px; text-align: center; text-decoration: none; font-family: "Liberation Serif", serif; font-size: 44px; }
.code q { quotes: none; font-family: "Liberation Serif", serif; width: 11.500px; text-align: center; font-size: 36px; }
.code q::before, .code q::after { content: none; }
.code u { display: flex; height: 37px; border-radius: 8px / 15px; }
.code .sp { margin-left: 13px; margin-right: 2px; }
.wh .gn { margin-right: -5px; width: 124px; }
.wh .gn, .if .bu { background: none; }
.gn > u:nth-child(1) { width: 29px; padding-left: 5px; }
.gn > u:nth-child(2) { width: 56px; padding-left: 0; letter-spacing: 3px; }
.gn > u:nth-child(3) { width: 39px; padding-left: 6px; }
.code .br { width: 16px; margin-left: 14px; margin-right: 15px; }
.if .bu { margin-left: -4px; }
.if .bu > u:nth-child(1) { width: 53px; padding-left: 6px; letter-spacing: -1px; }
.if .bu > u:nth-child(2) { width: 23px; padding-left: 6px; }
.if .bu > u:nth-child(3) { width: 70px; padding-left: 3px; border-radius: 8px 0 0 8px / 15px 0 0 15px; }
.if .bu > .ge { width: 72px; padding-left: 5px; font-family: "DejaVu Sans", sans-serif; font-weight: 200; border-radius: 0 8px 8px 0 / 0 15px 15px 0; }
.if .bu > u:nth-child(5) { width: 29px; padding-left: 3px; }
.if .bu > u:nth-child(6) { width: 25px; padding-left: 5px; }
.if .br { margin: 0 4px 0 6px; }
.code .b0 { width: 16px; margin-right: 14px; }
.code .b4 { margin-right: 2px; margin-left: 12px; }
.code .b7 { width: 20px; }
.memo { position: absolute; width: 35px; height: 35px; }
.n1 { left: 492px; top: -10px; }
.n2 { left: 800px; top: -8px; }
.n3 { left: 852px; top: -8px; }
.n4 { left: 487px; top: 8px; }
.pointer { position: absolute; left: 859px; top: 634px; width: 16px; height: 24px; }

.talking { position: absolute; left: 2796px; top: 56px; width: 488px; height: 80px; padding-left: 44px; background: #323e4a; color: #fff; font: 23px/88px Inter, sans-serif; box-shadow: 0 6px 34px rgba(0,0,0,.32); }
```
